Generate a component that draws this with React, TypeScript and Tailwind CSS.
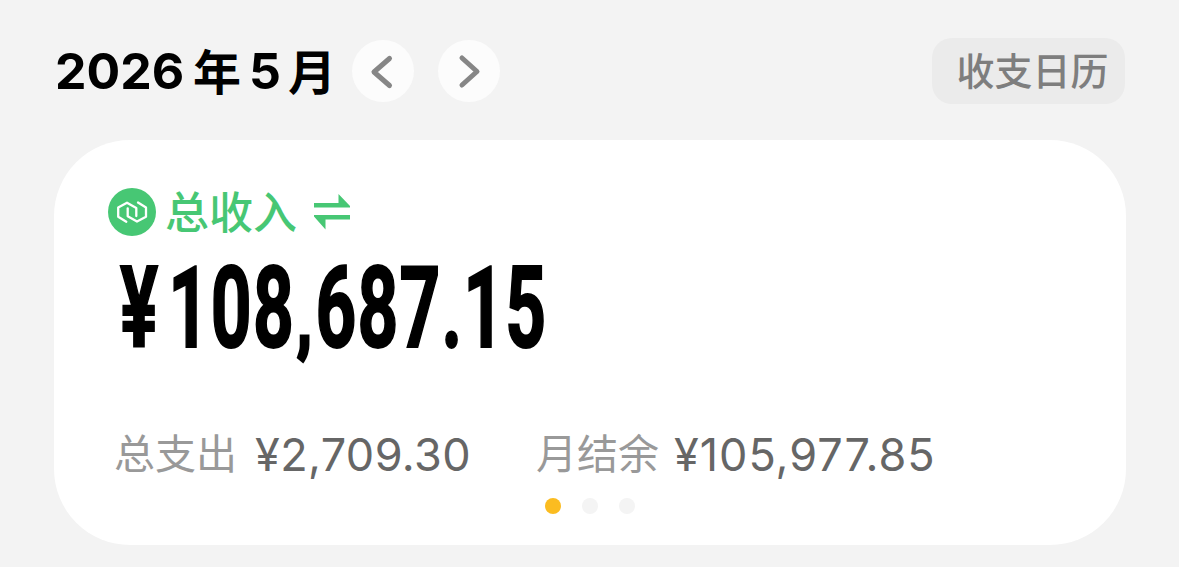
const cjk = "font-['Noto_Sans_CJK_SC',sans-serif]";
const inter = "font-['Inter','Noto_Sans_CJK_SC',sans-serif]";

function Chevron({ d }: { d: string }) {
  return (
    <svg viewBox="0 0 62 62" className="size-[62px]" fill="none" stroke="#868686" strokeWidth="5" strokeLinecap="round" strokeLinejoin="round">
      <path d={d} />
    </svg>
  );
}

function Header() {
  return (
    <header className="flex h-[66px] items-center">
      <h1 className="flex h-[66px] w-[297px] items-center whitespace-nowrap leading-none text-black">
        <span className={`${inter} w-[138px] text-[50px] font-bold`}>2026</span>
        <span className={`${cjk} w-[56px] pb-[5px] text-[48px] font-bold`}>年</span>
        <span className={`${inter} w-[39px] text-[50px] font-bold`}>5</span>
        <span className={`${cjk} pb-[5px] text-[48px] font-bold`}>月</span>
      </h1>
      <button aria-label="上个月" className="size-[62px] rounded-full bg-[#fcfcfc]">
        <Chevron d="M37.500 18.500 22 32 37.500 45.500" />
      </button>
      <button aria-label="下个月" className="ml-6 size-[62px] rounded-full bg-[#fcfcfc]">
        <Chevron d="M24 18 39 31.500 24 45" />
      </button>
      <button className={`${cjk} ml-auto flex h-[66px] w-[193px] items-center justify-center rounded-[20px] bg-[#ebebeb] pb-[4px] pl-2 text-[38px] leading-none font-medium whitespace-nowrap text-[#7e7e7e]`}>
        收支日历
      </button>
    </header>
  );
}

function CoinIcon() {
  return (
    <svg viewBox="0 0 48 48" className="size-12 shrink-0" fill="none">
      <circle cx="24" cy="24" r="24" fill="#47c774" />
      <g stroke="white" strokeWidth="2.300" strokeLinejoin="round" strokeLinecap="round">
        <path d="M18.300 33.700 10.200 28.700V19.500L19 14.700 28.300 20V28" />
        <path d="M30 14.500 38 19.500V28.700L29 33.500 19.700 28.200V20.300" />
      </g>
    </svg>
  );
}

function SwapIcon() {
  return (
    <svg viewBox="0 0 36 36" className="ml-[17px] h-9 w-9 shrink-0" fill="#47c774">
      <path d="M0 9H24.500V0L36 12V13.500H0Z" />
      <path d="M36 25.500H11.500V35.500L0 22.500V21H36Z" />
    </svg>
  );
}

export default function App() {
  return (
    <main className="h-[567px] w-[1179px] overflow-hidden bg-[#f3f3f3] pt-[38px] pr-[54px] pl-[55px]">
      <Header />
      <section className="mt-9 -ml-px flex h-[405px] w-[1072px] flex-col rounded-[76px] bg-white pt-12 pl-[54px]">
        <div className="flex h-12 items-center">
          <CoinIcon />
          <span className={`${cjk} ml-[9px] pb-[4px] text-[44px] leading-none font-medium whitespace-nowrap text-[#47c774]`}>总收入</span>
          <SwapIcon />
        </div>
        <div className="mt-[15px] ml-[12px] h-[116px] origin-left scale-x-[0.63] font-['Roboto',sans-serif] text-[113px] leading-[116px] font-bold whitespace-nowrap text-black [-webkit-text-stroke:2px_black]">
          <span className="tracking-[16px]">¥</span>
          <span className="tracking-[2.5px]">108</span>
          <span className="ml-[5px] text-[72px] tracking-[9px] [-webkit-text-stroke:7px_black]">,</span>
          <span className="tracking-[1.8px]">687.15</span>
        </div>
        <div className="mt-[59px] ml-[6px] flex h-14 items-center leading-none whitespace-nowrap">
          <span className={`${cjk} w-[141px] pb-[6px] text-[41px] text-[#999]`}>总支出</span>
          <span className={`${inter} w-[281px] text-[45px] tracking-[0.4px] text-[#666]`}>¥2,709.30</span>
          <span className={`${cjk} w-[138px] pb-[6px] text-[41px] text-[#999]`}>月结余</span>
          <span className={`${inter} text-[45px] tracking-[1px] text-[#666]`}>¥105,977.85</span>
        </div>
        <div className="mt-[16px] ml-[437px] flex gap-[21px]">
          <i className="size-4 rounded-full bg-[#fbbc20]" />
          <i className="size-4 rounded-full bg-[#f4f4f4]" />
          <i className="size-4 rounded-full bg-[#f4f4f4]" />
        </div>
      </section>
    </main>
  );
}
